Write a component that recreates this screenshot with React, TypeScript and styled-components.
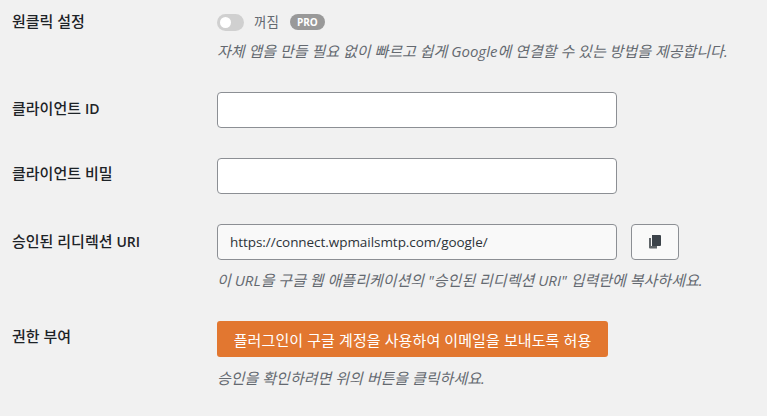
import React from "react";
import styled, { createGlobalStyle } from "styled-components";

const GlobalStyle = createGlobalStyle`
  html, body {
    margin: 0;
    padding: 0;
    background: #f1f1f1;
    font-family: "Open Sans", "Noto Sans CJK KR", sans-serif;
    overflow: hidden;
  }
`;

const Page = styled.div`
  width: 767px;
  height: 416px;
  display: flex;
  flex-direction: column;
  padding: 12px 0 0 12px;
  box-sizing: border-box;
`;

const Row = styled.div<{ $height: number }>`
  display: grid;
  grid-template-columns: 205px 1fr;
  height: ${(p) => p.$height}px;
`;

const Label = styled.div<{ $top: number }>`
  padding-top: ${(p) => p.$top}px;
  font-size: 15px;
  line-height: 18px;
  font-weight: 500;
  color: #1d2327;
`;

const LabelLatin = styled.span`
  font-size: 14px;
  font-weight: 600;
`;

const Field = styled.div`
  display: flex;
  flex-direction: column;
  align-items: flex-start;
`;

const ToggleRow = styled.div`
  display: flex;
  align-items: center;
  height: 20px;
`;

const Track = styled.span`
  position: relative;
  width: 27px;
  height: 17px;
  border-radius: 9px;
  background: #d0d0d0;
`;

const Knob = styled.span`
  position: absolute;
  left: 3px;
  top: 3px;
  width: 11px;
  height: 11px;
  border-radius: 50%;
  background: #fff;
`;

const ToggleText = styled.span`
  margin-left: 10px;
  font-size: 13.5px;
  line-height: 20px;
  color: #646970;
`;

const Pro = styled.span`
  margin-left: 11px;
  width: 35px;
  height: 16px;
  border-radius: 8px;
  background: #999;
  color: #fff;
  font-size: 10px;
  font-weight: 700;
  line-height: 16px;
  text-align: center;
`;

const Hint = styled.p<{ $top: number }>`
  margin: ${(p) => p.$top}px 0 0;
  font-size: 15px;
  line-height: 20px;
  font-style: italic;
  color: #646970;
  white-space: nowrap;
`;

const InputLine = styled.div`
  display: flex;
  gap: 14px;
`;

const TextInput = styled.input`
  width: 400px;
  height: 36px;
  box-sizing: border-box;
  margin: 0;
  padding: 0 12px;
  border: 1px solid #8c8f94;
  border-radius: 4px;
  background: ${(p) => (p.readOnly ? "#f9f9f9" : "#fff")};
  font-family: inherit;
  font-size: 13.5px;
  letter-spacing: -0.05px;
  color: #2c3338;
  outline: none;
`;

const CopyButton = styled.button`
  width: 48px;
  height: 36px;
  padding: 0;
  display: flex;
  align-items: center;
  justify-content: center;
  border: 1px solid #8c8f94;
  border-radius: 4px;
  background: #f9f9f9;
`;

const PrimaryButton = styled.button`
  width: 391px;
  height: 36px;
  padding: 0;
  border: 0;
  border-radius: 3px;
  background: #e27730;
  color: #fff;
  font-family: inherit;
  font-size: 15px;
  letter-spacing: 0.1px;
`;

function CopyIcon() {
  return (
    <svg width="12" height="14" viewBox="0 0 12 14" aria-hidden="true">
      <path fill="#2c3338" opacity="0.75" d="M0 3h2v8h6v2.5H1a1 1 0 0 1-1-1z" />
      <path fill="#3c434a" d="M3 0h8a1 1 0 0 1 1 1v9a1 1 0 0 1-1 1H3z" />
    </svg>
  );
}

export default function App() {
  return (
    <Page>
      <GlobalStyle />
      <Row $height={80}>
        <Label $top={0}>원클릭 설정</Label>
        <Field>
          <ToggleRow>
            <Track>
              <Knob />
            </Track>
            <ToggleText>꺼짐</ToggleText>
            <Pro>PRO</Pro>
          </ToggleRow>
          <Hint $top={9}>
            자체 앱을 만들 필요 없이 빠르고 쉽게 Google에 연결할 수 있는 방법을 제공합니다.
          </Hint>
        </Field>
      </Row>
      <Row $height={66}>
        <Label $top={7}>
          클라이언트 <LabelLatin>ID</LabelLatin>
        </Label>
        <Field>
          <TextInput />
        </Field>
      </Row>
      <Row $height={66}>
        <Label $top={6}>클라이언트 비밀</Label>
        <Field>
          <TextInput />
        </Field>
      </Row>
      <Row $height={97}>
        <Label $top={8}>
          승인된 리디렉션 <LabelLatin>URI</LabelLatin>
        </Label>
        <Field>
          <InputLine>
            <TextInput readOnly value="https://connect.wpmailsmtp.com/google/" />
            <CopyButton aria-label="복사">
              <CopyIcon />
            </CopyButton>
          </InputLine>
          <Hint $top={10}>
            이 URL을 구글 웹 애플리케이션의 "승인된 리디렉션 URI" 입력란에 복사하세요.
          </Hint>
        </Field>
      </Row>
      <Row $height={80}>
        <Label $top={6}>권한 부여</Label>
        <Field>
          <PrimaryButton>플러그인이 구글 계정을 사용하여 이메일을 보내도록 허용</PrimaryButton>
          <Hint $top={11}>승인을 확인하려면 위의 버튼을 클릭하세요.</Hint>
        </Field>
      </Row>
    </Page>
  );
}
